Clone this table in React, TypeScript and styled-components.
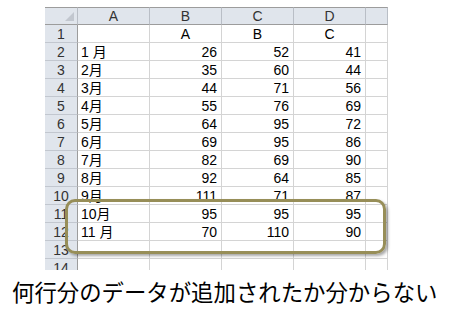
import React from 'react';
import styled, { createGlobalStyle } from 'styled-components';

const GlobalStyle = createGlobalStyle`
  html, body {
    margin: 0;
    padding: 0;
    background: #ffffff;
  }
  body {
    width: 453px;
    height: 316px;
    overflow: hidden;
  }
`;

const cols = ['A', 'B', 'C', 'D'];

const rows: [string, string, string, string][] = [
  ['', 'A', 'B', 'C'],
  ['1 月', '26', '52', '41'],
  ['2月', '35', '60', '44'],
  ['3月', '44', '71', '56'],
  ['4月', '55', '76', '69'],
  ['5月', '64', '95', '72'],
  ['6月', '69', '95', '86'],
  ['7月', '82', '69', '90'],
  ['8月', '92', '64', '85'],
  ['9月', '111', '71', '87'],
  ['10月', '95', '95', '95'],
  ['11 月', '70', '110', '90'],
  ['', '', '', ''],
  ['', '', '', ''],
];

const Page = styled.div`
  position: relative;
  width: 453px;
  height: 316px;
  display: flex;
  flex-direction: column;
`;

// the sheet is cropped part way through row 14, as in the screenshot
const SheetFrame = styled.div`
  margin: 6px 0 0 45px;
  width: 343px;
  height: 264px;
  overflow: hidden;
  display: flex;
  flex-direction: column;
`;

const TopStrip = styled.div`
  height: 2px;
  background: #dfe3ec;
  margin-bottom: 1px;
`;

const Grid = styled.div`
  display: grid;
  grid-template-columns: 33px 72px 72px 72px 72px 22px;
  grid-auto-rows: 18px;
  font-family: 'Liberation Sans', 'Noto Sans CJK JP', sans-serif;
  font-size: 14px;
  color: #000;
`;

const HeadCell = styled.div`
  position: relative;
  box-sizing: border-box;
  background: #e0e5ec;
  border-top: 1px solid #9c9c9c;
  border-bottom: 1px solid #9c9c9c;
  border-right: 1px solid #b9bec6;
  display: flex;
  align-items: center;
  justify-content: center;
  color: #333;
  font-size: 14px;
  line-height: 1;
`;

const CornerMark = styled.span`
  position: absolute;
  right: 3px;
  bottom: 3px;
  width: 0;
  height: 0;
  border-left: 9px solid transparent;
  border-bottom: 9px solid #c2c7cf;
`;

const RowHead = styled.div`
  box-sizing: border-box;
  background: #e0e5ec;
  border-right: 1px solid #9c9c9c;
  border-bottom: 1px solid #c2c7cf;
  display: flex;
  align-items: center;
  justify-content: center;
  color: #333;
  line-height: 1;
`;

const Cell = styled.div<{ $align: 'left' | 'right' | 'center' }>`
  box-sizing: border-box;
  border-right: 1px solid #d4d4d4;
  border-bottom: 1px solid #d4d4d4;
  display: flex;
  align-items: center;
  justify-content: ${({ $align }) =>
    $align === 'left' ? 'flex-start' : $align === 'right' ? 'flex-end' : 'center'};
  padding: ${({ $align }) => ($align === 'left' ? '0 0 0 3px' : $align === 'right' ? '0 4px 0 0' : '0')};
  line-height: 1;
  white-space: pre;
`;

const Highlight = styled.div`
  position: absolute;
  left: 65px;
  top: 199px;
  width: 321px;
  height: 55px;
  box-sizing: border-box;
  border: 3px solid #978e58;
  border-radius: 10px;
  box-shadow: 2px 2px 3px rgba(0, 0, 0, 0.35);
  pointer-events: none;
`;

const Caption = styled.p`
  margin: 8px 0 0 12px;
  font-family: 'Noto Sans CJK JP', sans-serif;
  font-size: 22.4px;
  line-height: 26px;
  color: #000;
  white-space: nowrap;
`;

const App: React.FC = () => {
  return (
    <Page>
      <GlobalStyle />
      <SheetFrame>
        <TopStrip />
        <Grid>
          <HeadCell>
            <CornerMark />
          </HeadCell>
          {cols.map((c) => (
            <HeadCell key={c}>{c}</HeadCell>
          ))}
          <HeadCell />
          {rows.map((r, i) => (
            <React.Fragment key={i}>
              <RowHead>{i + 1}</RowHead>
              {r.map((v, j) => (
                <Cell key={j} $align={i === 0 ? 'center' : j === 0 ? 'left' : 'right'}>
                  {v}
                </Cell>
              ))}
              <Cell $align="left" />
            </React.Fragment>
          ))}
        </Grid>
      </SheetFrame>
      <Highlight />
      <Caption>何行分のデータが追加されたか分からない</Caption>
    </Page>
  );
};

export default App;
